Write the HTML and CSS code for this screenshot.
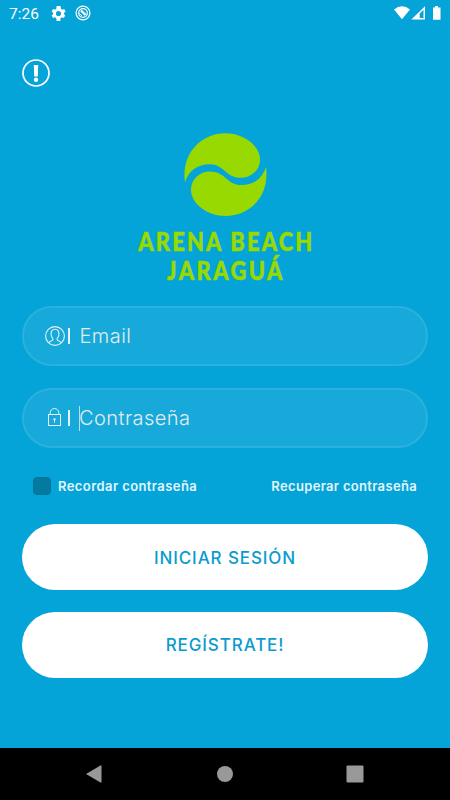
FILE: index.html
```html
<!DOCTYPE html>
<html lang="es">
<head>
    <meta charset="UTF-8">
    <meta name="viewport" content="width=device-width, initial-scale=1.0">
    <title>Arena Beach Jaraguá</title>
    <link rel="stylesheet" href="styles.css">
</head>
<body>
    <!-- Status bar -->
    <div class="status-bar">
        <span class="time">7:26</span>
        <svg class="gear" viewBox="2 2 20 20"><path fill="#fff" fill-rule="evenodd" d="M19.4 13c.1-.6.1-1.4 0-2l2.1-1.6-2-3.5-2.5 1a7.5 7.5 0 0 0-1.700-1L15 3.2 14.500 2h-5L9 5.900c-.6.2-1.200.6-1.700 1l-2.500-1-2 3.500L4.900 11c-.1.6-.1 1.4 0 2l-2.100 1.600 2 3.500 2.500-1c.5.4 1.100.8 1.700 1l.4 3.900h5l.4-3.900c.6-.2 1.200-.6 1.700-1l2.500 1 2-3.500zM12 8.600a3.400 3.400 0 1 1 0 6.800 3.400 3.400 0 0 1 0-6.800z"/></svg>
        <svg class="badge" viewBox="0 0 16 16" fill="none" stroke="#fff"><circle cx="8" cy="8" r="6.900" stroke-width="1.3"/><circle cx="8" cy="8" r="4.3" stroke-width="1.2"/><path d="M6 5.5 10.500 10" stroke-width="2.4"/><path d="M4.5 8.5 7 11" stroke-width="1"/></svg>
        <svg class="signals" viewBox="0 0 50 16" fill="#fff"><path d="M0 3.600Q8 -3.2 16 3.600L8 13.200z"/><path fill-rule="evenodd" d="M31 .3V13.500H17.300zM29.5 3.800 25.700 7.600V12h3.800z"/><path d="M39 1.500h2V0h3v1.500h2.500V13.800H39z"/></svg>
    </div>

    <main class="login">
        <svg class="info" viewBox="0 0 28 28"><circle cx="14" cy="14" r="13" fill="none" stroke="#fff" stroke-width="1.700"/><path fill="#fff" d="M11.800 6h4.400l-.4 11.500h-3.600z"/><circle cx="14" cy="20.700" r="2.200" fill="#fff"/></svg>

        <div class="brand">
            <svg class="ball" viewBox="160 38 250 250" fill="#97d900">
                <path id="half" d="M163 187C151 104 208 39 285 39C342 39 389 78 389 118C389 150 362 173 332 173C284 173 282 132 237 132C203 132 174 150 163 187Z"/>
                <use href="#half" transform="rotate(180 285 163.5)"/>
            </svg>
            <h1><span class="line-one">ARENA BEACH</span><span class="line-two">JARAGUÁ</span></h1>
        </div>

        <label class="field">
            <svg viewBox="0 0 20 20" fill="none" stroke="#e5f3f8" stroke-width="1.1"><circle cx="10" cy="10" r="9.4"/><path d="M3.600 16.700C4.500 14.800 8 15 8 13.500c0-1-1.700-2.500-1.900-5C5.900 5 7.300 3.300 10 3.300s4.100 1.700 3.900 5.200c-.2 2.500-1.900 4-1.900 5 0 1.500 3.500 1.300 4.400 3.200"/></svg>
            <i class="divider"></i>
            <span class="placeholder email">Email</span>
        </label>

        <label class="field">
            <svg viewBox="0 0 20 20" fill="none" stroke="#e5f3f8" stroke-width="1"><rect x="3.5" y="6.500" width="12" height="11"/><path d="M5.200 6.500V4.800a4.300 4.300 0 0 1 8.600 0v1.700"/><circle cx="9.500" cy="11.300" r=".8" fill="#fff"/><path d="M9.500 12v2.500"/></svg>
            <i class="divider"></i>
            <i class="caret"></i>
            <span class="placeholder">Contraseña</span>
        </label>

        <div class="options">
            <span class="checkbox"></span>
            <span class="remember">Recordar contraseña</span>
            <a class="recover">Recuperar contraseña</a>
        </div>

        <button class="button signin">INICIAR SESIÓN</button>
        <button class="button signup">REGÍSTRATE!</button>
    </main>

    <!-- Navigation bar -->
    <nav class="nav-bar">
        <svg viewBox="0 0 18 18" fill="#999"><path d="M0 9 14.500.5Q15.500 0 15.500 1V17q0 1-1 .5z"/></svg>
        <svg viewBox="0 0 18 18" fill="#999"><circle cx="9" cy="9" r="8"/></svg>
        <svg viewBox="0 0 18 18" fill="#999"><rect x=".5" y=".5" width="17" height="17" rx="1"/></svg>
    </nav>
</body>
</html>
```
FILE: styles.css
```css
* {
    margin: 0;
    padding: 0;
    box-sizing: border-box;
}

body {
    width: 450px;
    height: 800px;
    display: flex;
    flex-direction: column;
    background-color: #04a4d9;
    font-family: 'Inter', sans-serif;
    color: white;
    overflow: hidden;
}

svg {
    display: block;
    flex-shrink: 0;
}

.status-bar {
    height: 28px;
    padding: 0 8px;
    display: flex;
    align-items: center;
    font-family: 'Roboto', sans-serif;
}

.time {
    width: 43px;
    padding-left: 1px;
    font-size: 15.5px;
}

.gear {
    width: 15px;
    height: 15px;
    margin-top: -2px;
}

.badge {
    width: 16px;
    height: 16px;
    margin: -2px 0 0 9px;
}

.signals {
    width: 50px;
    height: 16px;
    margin: 0 -2px 0 auto;
}

.login {
    height: 720px;
    padding: 31px 22px 0;
    display: flex;
    flex-direction: column;
}

.info {
    width: 28px;
    height: 28px;
    margin-left: -0.5px;
}

.brand {
    height: 219px;
    padding-top: 46px;
    display: flex;
    flex-direction: column;
    align-items: center;
}

.ball {
    width: 83px;
    height: 83px;
}

h1 {
    margin-top: 10px;
    display: flex;
    flex-direction: column;
    align-items: center;
    font-family: 'Lato', sans-serif;
    font-size: 27px;
    font-weight: 900;
    line-height: 29px;
    color: #97d900;
    white-space: nowrap;
    transform: scaleX(0.81);
    -webkit-text-stroke: 0.6px #97d900;
}

.line-one {
    margin-right: -4px;
    letter-spacing: 2.7px;
}

.line-two {
    margin-right: -3px;
    letter-spacing: 3px;
}

.field {
    height: 60px;
    margin-bottom: 22px;
    padding-left: 21px;
    display: flex;
    flex-shrink: 0;
    align-items: center;
    background-color: #17a9d9;
    border: 2px solid #2bb1dd;
    border-radius: 30px;
}

.field svg {
    width: 20px;
    height: 20px;
}

.divider {
    width: 2px;
    height: 16px;
    margin-left: 3px;
    background-color: #e5f3f8;
}

.caret {
    width: 1px;
    height: 25px;
    margin: 0 -1px 0 9px;
    background-color: #b9dfec;
}

.placeholder {
    font-size: 20px;
    font-weight: 350;
    letter-spacing: 0.45px;
    color: #e3ecef;
}

.email {
    margin-left: 9.5px;
}

.options {
    height: 32px;
    margin-bottom: 22px;
    padding: 0 11px;
    display: flex;
    align-items: center;
    font-size: 13px;
    font-weight: 600;
    letter-spacing: 0.42px;
    color: #e3f5fb;
}

.checkbox {
    width: 18px;
    height: 18px;
    margin-right: 7px;
    background-color: #047a9f;
    border: 1px solid #04759a;
    border-radius: 4px;
}

.recover {
    margin-left: auto;
    letter-spacing: 0.33px;
}

.button {
    height: 66px;
    margin-bottom: 21.5px;
    padding-top: 1px;
    flex-shrink: 0;
    background-color: white;
    border: none;
    border-radius: 33px;
    font-family: 'Inter', sans-serif;
    font-size: 17px;
    font-weight: 550;
    letter-spacing: 0.9px;
    color: #0b9bcf;
}

.nav-bar {
    height: 52px;
    padding: 0 86px;
    display: flex;
    justify-content: space-between;
    align-items: center;
    background-color: black;
}

.nav-bar svg {
    width: 18px;
    height: 18px;
}
```
